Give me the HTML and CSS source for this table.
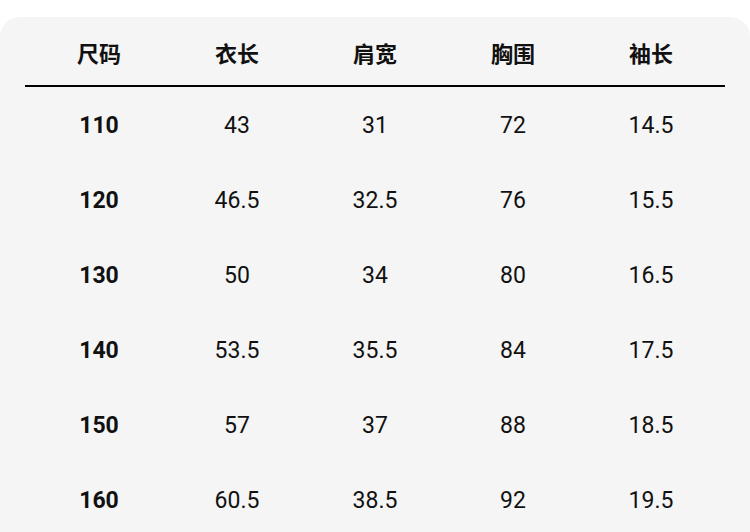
FILE: index.html
```html
<!DOCTYPE html>
<html lang="zh">
<head>
<meta charset="utf-8">
<link rel="stylesheet" href="styles.css">
</head>
<body>
<div class="card">
  <div class="row head">
    <div>尺码</div><div>衣长</div><div>肩宽</div><div>胸围</div><div>袖长</div>
  </div>
  <div class="row"><div class="size">110</div><div>43</div><div>31</div><div>72</div><div>14.5</div></div>
  <div class="row"><div class="size">120</div><div>46.5</div><div>32.5</div><div>76</div><div>15.5</div></div>
  <div class="row"><div class="size">130</div><div>50</div><div>34</div><div>80</div><div>16.5</div></div>
  <div class="row"><div class="size">140</div><div>53.5</div><div>35.5</div><div>84</div><div>17.5</div></div>
  <div class="row"><div class="size">150</div><div>57</div><div>37</div><div>88</div><div>18.5</div></div>
  <div class="row"><div class="size">160</div><div>60.5</div><div>38.5</div><div>92</div><div>19.5</div></div>
</div>
</body>
</html>
```
FILE: styles.css
```css
html, body {
  margin: 0;
  padding: 0;
  background: #ffffff;
  overflow: hidden;
}
body {
  font-family: Roboto, "Noto Sans CJK SC", sans-serif;
  color: #111111;
}
.card {
  margin-top: 17px;
  background: #f5f5f5;
  border-radius: 20px 20px 0 0;
  padding: 0 25px;
  height: 515px;
}
.row {
  display: grid;
  grid-template-columns: repeat(5, 138px);
  padding: 0 5px;
  height: 75px;
  align-items: center;
  text-align: center;
  font-size: 23px;
}
.row > div {
  line-height: 30px;
  position: relative;
  top: 1px;
}
.head {
  height: 66px;
  padding-top: 2px;
  border-bottom: 2px solid #000;
  font-weight: 700;
  font-family: "Noto Sans CJK SC", sans-serif;
  font-size: 22px;
}
.head > div {
  top: 0;
}
.size {
  font-weight: 700;
}
```
